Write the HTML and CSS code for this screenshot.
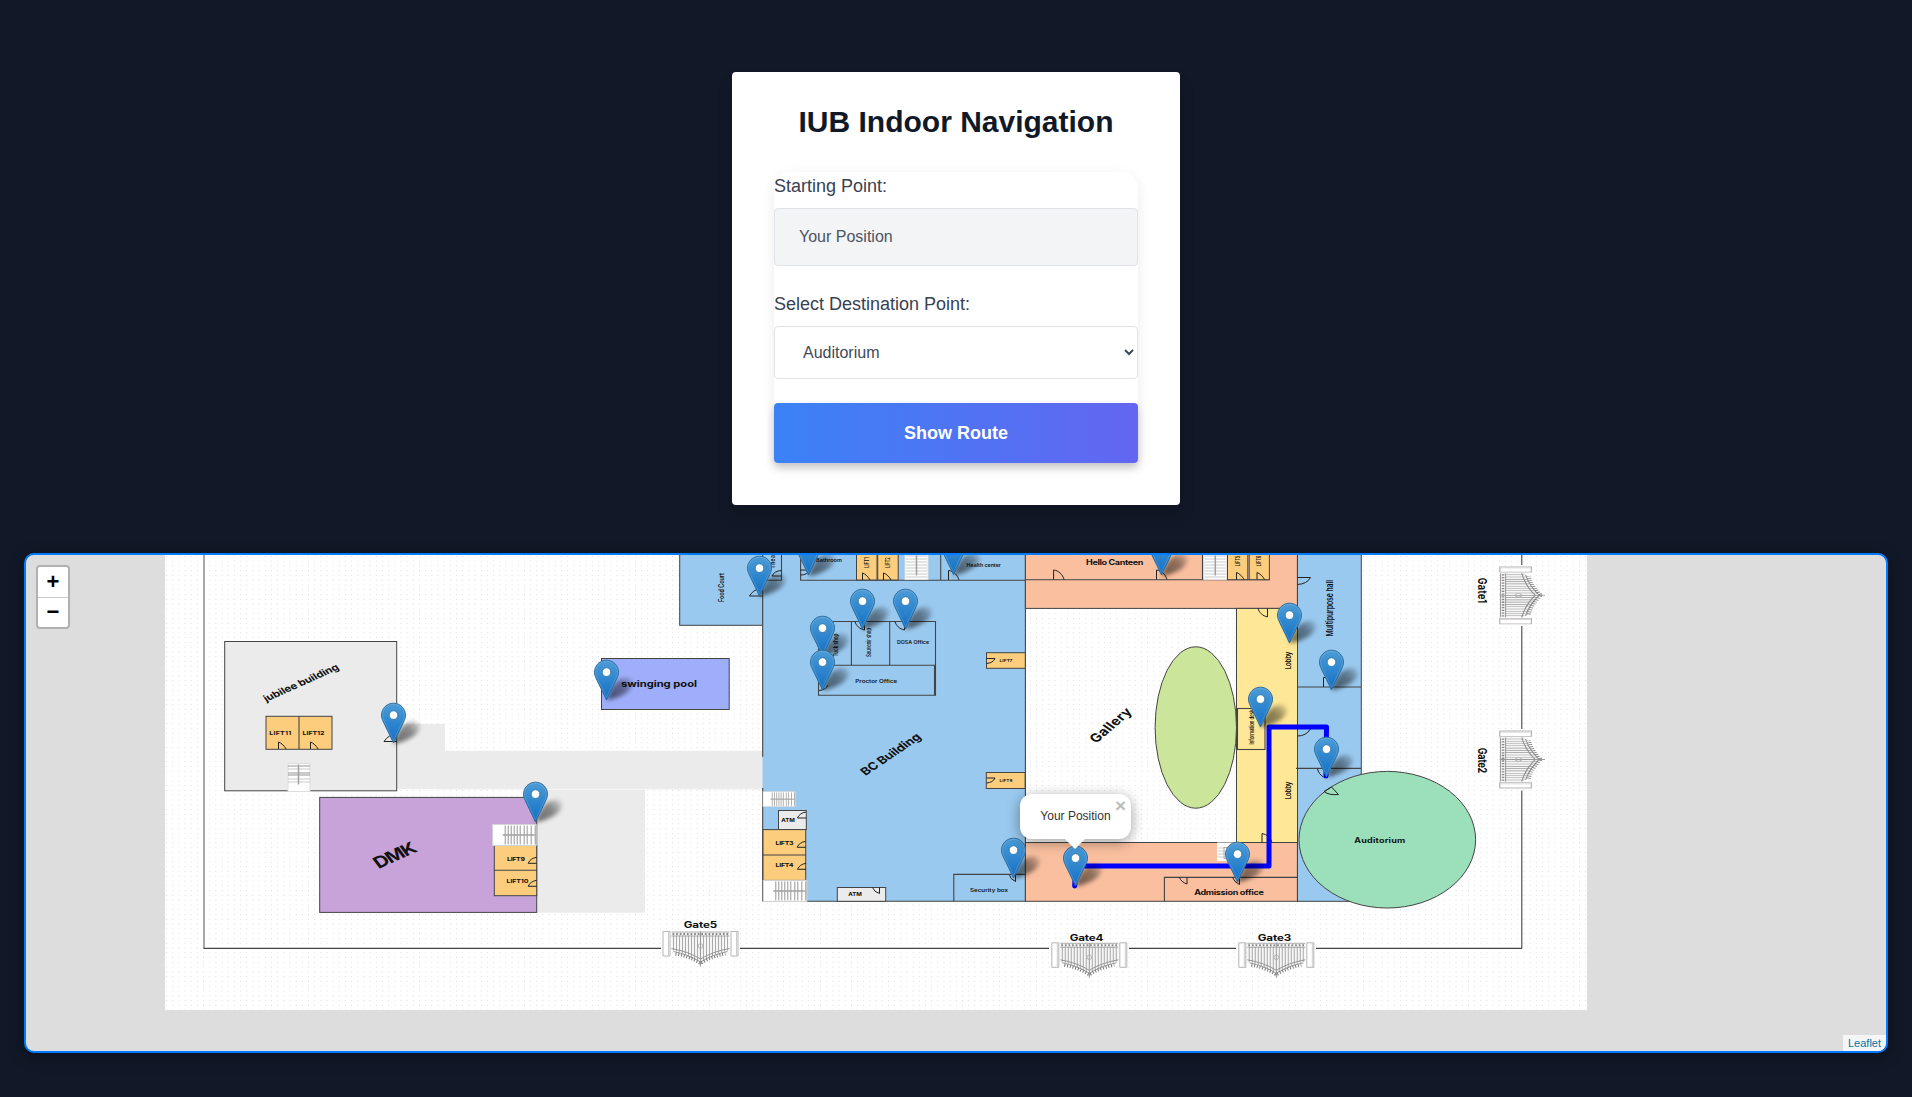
FILE: index.html
```html
<!DOCTYPE html>
<html lang="en">
<head>
<meta charset="utf-8">
<title>IUB Indoor Navigation</title>
<link rel="stylesheet" href="styles.css">
</head>
<body>
<main class="page">
  <section class="card">
    <h1 class="title">IUB Indoor Navigation</h1>
    <form class="form">
      <label class="label">Starting Point:</label>
      <div class="field readonly">Your Position</div>
      <label class="label second" for="dest">Select Destination Point:</label>
      <select class="field select" id="dest"><option>Auditorium</option></select>
      <button class="button" type="button">Show Route</button>
    </form>
  </section>

  <section class="map">
    <svg class="plan" viewBox="26 555 1860 496" width="1860" height="496">
      <defs>
        <pattern id="dots" x="1576.4" y="1002.9" width="6.17" height="4.775" patternUnits="userSpaceOnUse">
          <circle cx="3.08" cy="2.4" r=".52" fill="#d4d4d4"/>
        </pattern>
        <linearGradient id="pinFill" x1="0" y1="0" x2="0" y2="1">
          <stop offset="0" stop-color="#4c9cd6"/><stop offset="1" stop-color="#126fc6"/>
        </linearGradient>
        <linearGradient id="shadeFill" gradientUnits="userSpaceOnUse" x1="2" y1="-2" x2="26" y2="-24">
          <stop offset="0" stop-opacity=".55"/><stop offset=".55" stop-opacity=".42"/><stop offset="1" stop-opacity=".05"/>
        </linearGradient>
        <filter id="soft" x="-50%" y="-50%" width="200%" height="200%"><feGaussianBlur stdDeviation="2"/></filter>
        <g id="pin">
          <path d="M0-40.4C-6.6-40.4-12-35.1-12-28.5c0 2.6.8 4.6 1.9 6.9L0-.6 10.1-21.6c1.1-2.3 1.9-4.3 1.9-6.9C12-35.1 6.6-40.4 0-40.4z" fill="url(#pinFill)" stroke="#2e6f9f" stroke-width="1"/>
          <path d="M0-39.3C-6-39.3-10.9-34.4-10.9-28.5c0 2.4.7 4.2 1.8 6.4L0-3.2 9.1-22.1c1.1-2.2 1.8-4 1.8-6.4C10.9-34.4 6-39.3 0-39.3z" fill="none" stroke="#fff" stroke-opacity=".14"/>
          <circle cy="-28.5" r="4.4" fill="#fff" stroke="#2f78ad" stroke-width="1"/>
        </g>
        <path id="shade" d="M0 0C2-7 5-15 12-20C19-25 28-23 26-15C23-7 10-2 0 0z" fill="url(#shadeFill)" filter="url(#soft)"/>
        <!-- quarter-swing doors, hinged at the origin -->
        <path id="door" class="doorline" d="M0 0V-9.5C5-9 9-5 10.500 0"/>
        <path id="doorSmall" class="doorline" d="M0 0V-7C3-6 6-3 7.500 0"/>
        <path id="doorDown" class="doorline" d="M0 0V8.500C-5 7.500-8.500 4-9.500 0"/>
        <path id="doorSide" class="doorline" d="M0 0H-8.500C-7.500-3-4-5.500 0-6"/>
        <g id="stairsV">
          <rect width="23" height="26" fill="#fff" stroke="#ddd"/>
          <path class="tread" d="M1 2.500H22M1 5.500H22M1 8.500H22M1 11.500H22M1 14.500H22M1 17.500H22M1 20.500H22M1 23.500H22"/>
          <path class="rail" d="M11.500 2V22"/>
        </g>
        <g id="stairsH">
          <rect width="43.500" height="21" fill="#fff" stroke="#d5d5d5"/>
          <path class="tread dark" d="M12.500 1V20M15.500 1V20M18.500 1V20M21.500 1V20M24.500 1V20M27.500 1V20M31.500 1V20M34.500 1V20M38.500 1V20M42.500 1V20"/>
          <path class="rail" d="M10 10.500H42"/>
        </g>
        <!-- gate, 76 x 36, centred on the origin -->
        <g id="gate">
          <path d="M-29 2V20Q-12 24 0 31Q12 24 29 20V2z" fill="#f5f5f5"/>
          <path class="bars" d="M-27 5V20M-24 5V21M-21 5V22M-18 5V23M-15 5V24M-12 5V26M-9 5V27M-6 5V29M-3 5V30M3 5V30M6 5V29M9 5V27M12 5V26M15 5V24M18 5V23M21 5V22M24 5V21M27 5V20"/>
          <path d="M-29 1.500H29M-29 5.500H29" stroke="#999" fill="none" stroke-width=".8"/>
          <path d="M-28 3.500H28" stroke="#888" stroke-width="2" stroke-dasharray="1.700 1.900" fill="none"/>
          <path d="M-29 18Q-12 21 0 28.500Q12 21 29 18M-27 21Q-12 24 0 31.500Q12 24 27 21" stroke="#8c8c8c" fill="none" stroke-width=".9"/>
          <path d="M-25 23.500Q-12 25.500 0 33Q12 25.500 25 23.500" stroke="#777" fill="none" stroke-width="3" stroke-dasharray="1 1.800"/>
          <path d="M0 1V36M-2 33H2" stroke="#999" fill="none"/>
          <circle cy="15.500" r="2.300" fill="none" stroke="#aaa" stroke-width=".8"/>
          <path d="M-37.500 1H-30.500V25.500H-37.500zM30.500 1H37.500V25.500H30.500z" fill="#fff" stroke="#b9b4b4"/>
          <path d="M-32 1V25M36 1V25" stroke="#ccc"/>
        </g>
      </defs>

      <rect x="165" y="540" width="1422" height="470" fill="#fff"/>
      <rect x="165" y="540" width="1422" height="470" fill="url(#dots)"/>

      <!-- campus boundary -->
      <path d="M204 540V948.500" stroke="#999" stroke-width="1.700"/>
      <path class="line" d="M203.500 948.400H661M740 948.400H1049M1129 948.400H1236M1316 948.400H1522M1521.800 555V565M1521.800 626V729M1521.800 790.500V948.500"/>

      <!-- walkways -->
      <path fill="#ebebeb" d="M397 724H445V750.700H763V789.300H645V912.700H537V789.300H397z"/>
      <path d="M445 789.300H763" stroke="#f6f6f6"/>

      <!-- jubilee building -->
      <rect class="room grey" x="224.700" y="641.500" width="172" height="149.300"/>
      <rect class="room lift" x="266" y="716.300" width="66" height="33"/><path class="line" d="M299 716V749"/>
      <use href="#doorSmall" x="278.500" y="749"/><use href="#doorSmall" x="310.500" y="749"/>
      <g transform="translate(288 763.500)"><rect width="22" height="28" fill="#fff" stroke="#ddd"/><path class="tread dark" d="M0 2.500H22M0 9.500H22M0 11.500H22"/><path class="tread" d="M0 5.500H22M0 15.500H22M0 18.500H22"/><path class="rail" d="M10.500 1V21"/></g>
      <path class="doorline" d="M397 741.500H384Q388 735 397 733.500"/>

      <!-- DMK -->
      <rect class="room" fill="#c7a3da" x="319.700" y="797.400" width="217" height="115"/>
      <rect class="room lift" x="494.300" y="845.300" width="42.400" height="50.400"/><path class="line" d="M494 870.300H537"/>
      <use href="#stairsH" x="492.700" y="824.500"/>
      <use href="#doorSide" x="536.700" y="863.300"/><use href="#doorSide" x="536.700" y="886.300"/>

      <!-- pool -->
      <rect class="room" fill="#9eaefb" x="601.500" y="658.500" width="127.700" height="51"/>

      <!-- BC building -->
      <rect class="room blue" x="679.700" y="540" width="83" height="85.300"/>
      <path fill="#9ac9ef" d="M762.500 540H1025.500V901.300H762.500z"/>
      <path class="line" d="M762.700 555V756.700M762.700 788V901.300M762.700 901.300H1025.500M1025.400 555V901.300"/>
      <path class="line" d="M763 580.300H781.500V555M800.600 555V580.300H1025.500M940.700 555V580.300"/>
      <path class="doorline" d="M781.500 576H772Q774 571 781.500 570.500M749.500 596H762.500M749.500 596Q753 590 759 589M800.600 570H808.600Q808 575 800.600 575"/>
      <rect class="room lift" x="856.500" y="540" width="20.500" height="40"/><rect class="room lift" x="877.700" y="540" width="20.500" height="40"/>
      <use href="#doorSmall" x="862.500" y="580"/><use href="#doorSmall" x="883.500" y="580"/>
      <use href="#stairsV" x="905" y="553.500"/>
      <use href="#door" x="948.500" y="580"/>
      <path class="line" d="M818.500 621.500H935.500V695.300H818.500zM818.500 665.300H935.500M851.400 621.500V665.300M889.700 621.500V665.300"/>
      <path class="line" d="M934.500 665.300V695.300"/>
      <use href="#doorDown" x="864.500" y="621.500"/><use href="#doorDown" x="904.500" y="621.500"/>
      <path class="doorline" d="M819 690.500Q826 690 828 685"/>
      <rect class="room lift" x="986.500" y="652.700" width="38.800" height="15.600"/><rect class="room lift" x="986.300" y="772.500" width="38.800" height="16"/>
      <path class="doorline" d="M986.500 658.500H995Q993 663 986.500 663.500M986.500 778H995Q993 782.500 986.500 783"/>
      <g transform="translate(763 791.700) scale(.74 .71)"><use href="#stairsH"/></g>
      <rect class="room grey" x="778.500" y="810.500" width="27.800" height="19"/><use href="#doorSide" x="806" y="818"/>
      <rect class="room lift" x="763" y="829.600" width="42.700" height="50.800"/><path class="line" d="M763 855H806"/>
      <use href="#doorSide" x="805.700" y="847.300"/><use href="#doorSide" x="806" y="869.300"/>
      <use href="#stairsH" x="763.300" y="880.400"/>
      <rect class="room grey" x="837.300" y="887.500" width="48.400" height="13.800"/>
      <path class="doorline" d="M879.500 887.500V893.500Q874 892 872.500 887.500"/>
      <path class="line" d="M953.800 901.300V874.400H1025.400"/><path class="doorline" d="M1015.500 874.400V881.500Q1010 879 1009.500 875"/>

      <!-- canteen and admission wings -->
      <rect class="room salmon" x="1025.400" y="540" width="272" height="68.400"/>
      <path class="line" d="M1025.400 579.700H1269.500M1202.500 555V579.700"/>
      <use href="#door" x="1053.600" y="579.500"/><use href="#door" x="1156.500" y="579.500"/>
      <use href="#stairsV" x="1203.800" y="553.500"/>
      <rect class="room lift" x="1227.500" y="540" width="20.300" height="39.700"/><rect class="room lift" x="1249.200" y="540" width="20.200" height="39.700"/>
      <use href="#doorSmall" x="1236.500" y="579.500"/><use href="#doorSmall" x="1257" y="579.500"/>
      <rect class="room yellow" x="1236.500" y="608.400" width="61" height="234.200"/>
      <use href="#doorDown" x="1267.500" y="608.400"/>
      <ellipse class="room" fill="#cbe59b" cx="1195.800" cy="727.500" rx="40.700" ry="80.700"/>
      <rect class="line" x="1237.500" y="708.500" width="27.500" height="41" fill="none"/>
      <rect class="room salmon" x="1025.400" y="842.500" width="272" height="58.800"/>
      <path class="line" d="M1297.400 877.400H1164.400V901.300"/>
      <g transform="translate(1217 842.500)"><rect width="23" height="18.500" fill="#fff"/><path class="tread" d="M1 5.500H8M1 8.500H8M1 11.500H8M1 14.500H8"/><rect x="7" y="5" width="3" height="11" class="rail thin"/></g>
      <path class="doorline" d="M1187 877.400V884Q1181 882 1179.500 877.400M1239.500 877.400V884.500Q1234 882 1232.500 877.400M1262 842.500V833.500Q1270 835 1272 842.500"/>

      <!-- east wing -->
      <rect class="room blue" x="1297.500" y="540" width="63.800" height="361.300"/>
      <path class="line" d="M1297.500 687H1361M1296 768.400H1361"/>
      <path class="doorline" d="M1297.500 577.500H1310.500Q1307 584 1297.500 584.500M1323.500 687V677.500H1327M1310.500 729Q1306 736 1297.500 736M1317.500 768.400Q1318 774 1325 778"/>
      <ellipse class="room" fill="#9ce0bb" cx="1387.300" cy="839.700" rx="88.300" ry="68.300"/>
      <path class="doorline" d="M1331.500 787L1324 791.500Q1329 795.500 1338.500 794.500L1331.500 787"/>

      <!-- gates -->
      <use href="#gate" x="700.500" y="930.500"/><use href="#gate" x="1089.300" y="941.800"/><use href="#gate" x="1276.300" y="941.800"/>
      <g transform="translate(1498.500 595.300) rotate(-90) scale(.76 1.290)"><use href="#gate"/></g>
      <g transform="translate(1498.500 759.500) rotate(-90) scale(.76 1.290)"><use href="#gate"/></g>

      <g class="names">
        <text transform="translate(303 685.500) scale(1.290 1) rotate(-30)" font-size="9" textLength="66">jubilee building</text>
        <text transform="translate(398.500 860) scale(1.290 1) rotate(-30)" font-size="16" textLength="36">DMK</text>
        <text transform="translate(893.700 757) scale(1.290 1) rotate(-41)" font-size="10.500" textLength="58">BC Building</text>
        <text transform="translate(1114.500 728) scale(1.290 1) rotate(-48)" font-size="11.800" textLength="42.500">Gallery</text>
        <text transform="translate(659 686.800) scale(1.290 1)" font-size="8.700" textLength="59">swinging pool</text>
        <text transform="translate(1379.800 843.300) scale(1.290 1)" font-size="7" textLength="39.500">Auditorium</text>
        <text transform="translate(1229 895) scale(1.290 1)" font-size="7" textLength="54">Admission office</text>
        <text transform="translate(1114.700 565.200) scale(1.290 1)" font-size="7" textLength="44.500">Hello Canteen</text>
        <text transform="translate(700.500 927.700) scale(1.290 1)" font-size="9" textLength="26">Gate5</text>
        <text transform="translate(1086.500 941) scale(1.290 1)" font-size="9" textLength="26">Gate4</text>
        <text transform="translate(1274.500 941) scale(1.290 1)" font-size="9" textLength="26">Gate3</text>
        <text transform="translate(1478 590.500) scale(1.290 1) rotate(90)" font-size="9" textLength="25.500">Gate1</text>
        <text transform="translate(1478 760.500) scale(1.290 1) rotate(90)" font-size="9" textLength="25.500">Gate2</text>
        <text class="light" transform="translate(1333.200 608.300) scale(1.290 1) rotate(-90)" font-size="7.200" textLength="56.500" lengthAdjust="spacingAndGlyphs">Multipurpose hall</text>
        <text class="light" transform="translate(1290.700 660.500) scale(1.290 1) rotate(-90)" font-size="6" textLength="17.500">Lobby</text>
        <text class="light" transform="translate(1290.700 790.500) scale(1.290 1) rotate(-90)" font-size="6" textLength="17.500">Lobby</text>
        <text class="light" transform="translate(1254.300 727) scale(1.290 1) rotate(-90)" font-size="4.300" textLength="35" lengthAdjust="spacingAndGlyphs">Information desk</text>
        <text class="light" transform="translate(723.700 587.500) scale(1.290 1) rotate(-90)" font-size="5.500" textLength="29">Food Court</text>
        <text class="light" transform="translate(774.500 558) scale(1.290 1) rotate(-90)" font-size="5" textLength="21">Theatre</text>
        <text class="light" transform="translate(837.500 645) scale(1.290 1) rotate(-90)" font-size="4.600" textLength="23">Tuck shop</text>
        <text class="light" transform="translate(871 642.500) scale(1.290 1) rotate(-90)" font-size="4.300" textLength="29" lengthAdjust="spacingAndGlyphs">Souvenir shop</text>
        <text class="light" transform="translate(868.500 562.500) scale(1.290 1) rotate(-90)" font-size="4.400" textLength="10.500" lengthAdjust="spacingAndGlyphs">LIFT1</text>
        <text class="light" transform="translate(889.500 562.500) scale(1.290 1) rotate(-90)" font-size="4.400" textLength="10.500" lengthAdjust="spacingAndGlyphs">LIFT2</text>
        <text class="light" transform="translate(1239.500 561) scale(1.290 1) rotate(-90)" font-size="4.400" textLength="10.500" lengthAdjust="spacingAndGlyphs">LIFT5</text>
        <text class="light" transform="translate(1260.500 561) scale(1.290 1) rotate(-90)" font-size="4.400" textLength="10.500" lengthAdjust="spacingAndGlyphs">LIFT6</text>
        <g class="light" font-size="4.600">
          <text transform="translate(829 562) scale(1.290 1)" textLength="20" lengthAdjust="spacingAndGlyphs">Bathroom</text>
          <text transform="translate(983.700 567) scale(1.290 1)" textLength="26.500" lengthAdjust="spacingAndGlyphs">Health center</text>
          <text transform="translate(913 643.800) scale(1.290 1)" textLength="25" lengthAdjust="spacingAndGlyphs">DOSA Office</text>
          <text transform="translate(876.300 683.300) scale(1.290 1)" textLength="32.500" lengthAdjust="spacingAndGlyphs">Proctor Office</text>
          <text transform="translate(989 891.700) scale(1.290 1)" textLength="29.500" lengthAdjust="spacingAndGlyphs">Security box</text>
          <text transform="translate(1006 662.300) scale(1.290 1)" font-size="4" textLength="10" lengthAdjust="spacingAndGlyphs">LIFT7</text>
          <text transform="translate(1006 781.800) scale(1.290 1)" font-size="4" textLength="10" lengthAdjust="spacingAndGlyphs">LIFT8</text>
        </g>
        <g font-size="5.400">
          <text transform="translate(280.300 735) scale(1.290 1)" textLength="17">LIFT11</text>
          <text transform="translate(313.500 735) scale(1.290 1)" textLength="17">LIFT12</text>
          <text transform="translate(516 860.600) scale(1.290 1)" textLength="14">LIFT9</text>
          <text transform="translate(517.500 882.700) scale(1.290 1)" textLength="17">LIFT10</text>
          <text transform="translate(788 821.800) scale(1.290 1)" font-size="5" textLength="10.500" lengthAdjust="spacingAndGlyphs">ATM</text>
          <text transform="translate(784.500 844.500) scale(1.290 1)" textLength="14">LIFT3</text>
          <text transform="translate(784.500 866.700) scale(1.290 1)" textLength="14">LIFT4</text>
          <text transform="translate(855 896.300) scale(1.290 1)" font-size="5" textLength="10.500" lengthAdjust="spacingAndGlyphs">ATM</text>
        </g>
      </g>

      <path class="route" d="M1074.700 886L1075.400 866H1269V727H1326.500L1326 776"/>

      <g transform="translate(0 .5)">
        <use href="#shade" x="393.500" y="743.500"/><use href="#shade" x="535.500" y="822"/><use href="#shade" x="606.500" y="700"/><use href="#shade" x="759.500" y="596"/><use href="#shade" x="808.500" y="576"/><use href="#shade" x="953.500" y="575"/><use href="#shade" x="862.500" y="629"/><use href="#shade" x="905.500" y="629"/><use href="#shade" x="822.500" y="656"/><use href="#shade" x="822.500" y="690"/><use href="#shade" x="1013.500" y="878"/><use href="#shade" x="1161.500" y="576"/><use href="#shade" x="1289.500" y="643"/><use href="#shade" x="1260.500" y="727"/><use href="#shade" x="1331.500" y="690"/><use href="#shade" x="1326.500" y="777"/><use href="#shade" x="1075.500" y="886"/><use href="#shade" x="1237.500" y="882"/>
      </g>
      <g transform="translate(0 .6)">
        <use href="#pin" x="808.500" y="575"/><use href="#pin" x="953.500" y="574.500"/><use href="#pin" x="1161.500" y="575"/><use href="#pin" x="759.500" y="596"/><use href="#pin" x="862.500" y="629"/><use href="#pin" x="905.500" y="629"/><use href="#pin" x="822.500" y="656"/><use href="#pin" x="822.500" y="690"/><use href="#pin" x="606.500" y="700"/><use href="#pin" x="393.500" y="743"/><use href="#pin" x="535.500" y="822"/><use href="#pin" x="1289.500" y="643"/><use href="#pin" x="1331.500" y="690"/><use href="#pin" x="1260.500" y="727"/><use href="#pin" x="1326.500" y="777"/><use href="#pin" x="1013.500" y="878"/><use href="#pin" x="1237.500" y="882"/><use href="#pin" x="1075.500" y="886"/>
      </g>
    </svg>

    <div class="zoom"><span class="zoom-btn">+</span><span class="zoom-btn">−</span></div>
    <div class="popup">Your Position<span class="close">×</span></div>
    <div class="credit">Leaflet</div>
  </section>
</main>
</body>
</html>
```
FILE: styles.css
```css
* { box-sizing: border-box; }
body {
  margin: 0;
  background: #111827;
  font-family: "Liberation Sans", Arial, sans-serif;
}
.page {
  height: 1097px;
  padding: 72px 24px 0;
  display: flex;
  flex-direction: column;
  align-items: center;
  gap: 48px;
  overflow: hidden;
}
.card {
  width: 448px;
  height: 433px;
  flex: none;
  padding: 32px 42px 0;
  background: #fff;
  border-radius: 4px;
  box-shadow: 0 10px 15px rgba(0, 0, 0, .15);
}
.title {
  margin: 0 0 32px;
  font-size: 30px;
  line-height: 36px;
  text-align: center;
  color: #111827;
}
.form {
  display: flex;
  flex-direction: column;
  height: 291px;
  border-radius: 16px 16px 4px 4px;
  box-shadow: 0 4px 14px rgba(0, 0, 0, .08);
}
.label {
  font-size: 18px;
  line-height: 28px;
  margin-bottom: 8px;
  color: #374151;
}
.label.second { margin-top: 24px; }
.field {
  border: 1px solid #dfe2e7;
  border-radius: 4px;
  color: #4b5563;
  font-size: 16px;
}
.readonly {
  height: 58px;
  padding: 0 24px;
  line-height: 56px;
  background: #f3f4f6;
}
.select {
  height: 53px;
  padding: 0 0 0 24px;
  background: #fff;
  color: #3f4957;
  font-family: inherit;
}
.button {
  height: 60px;
  margin-top: 24px;
  border: 0;
  border-radius: 4px;
  background: linear-gradient(to right, #3b82f6, #6366f1);
  box-shadow: 0 4px 8px rgba(0, 0, 0, .2);
  color: #fff;
  font: bold 18px "Liberation Sans", Arial, sans-serif;
}
.map {
  position: relative;
  width: 1864px;
  height: 500px;
  flex: none;
  border: 2px solid #007bff;
  border-radius: 10px;
  background: #ddd;
  overflow: hidden;
  box-shadow: 0 4px 16px rgba(0, 0, 0, .3);
}
.plan { display: block; }
.room { stroke: #444; stroke-width: 1; }
.line { stroke: #444; stroke-width: 1.1; fill: none; }
.grey { fill: #ebebeb; }
.lift { fill: #fbcd7c; }
.blue { fill: #9ac9ef; }
.salmon { fill: #f9bf9f; }
.yellow { fill: #fee796; }
.doorline { fill: none; stroke: #222; stroke-width: 1; }
.tread { fill: none; stroke: #c4c4c4; stroke-width: .9; }
.dark { stroke: #8a8a8a; }
.rail { fill: none; stroke: #a0a0a0; stroke-width: 1.5; }
.thin { stroke-width: .8; }
.bars { fill: none; stroke: #999; stroke-width: .8; }
.route { fill: none; stroke: #00f; stroke-width: 5; stroke-linecap: round; stroke-linejoin: round; }
.names { font-family: Inter, sans-serif; font-weight: 700; fill: #111; text-anchor: middle; }
.light { font-weight: 600; }
.zoom {
  position: absolute;
  left: 10px;
  top: 10px;
  width: 34px;
  border: 2px solid #b1b1b1;
  border-radius: 4px;
  background: #fff;
}
.zoom-btn {
  display: block;
  height: 30px;
  font: bold 22px/30px "Liberation Sans", Arial, sans-serif;
  text-align: center;
  color: #000;
}
.zoom-btn + .zoom-btn {
  border-top: 1px solid #ccc;
  line-height: 27px;
}
.popup {
  position: absolute;
  left: 994px;
  top: 239px;
  width: 111px;
  height: 45px;
  border-radius: 12px;
  background: #fff;
  box-shadow: 0 3px 14px rgba(0, 0, 0, .4);
  font-size: 12px;
  line-height: 44px;
  text-align: center;
  color: #333;
}
.popup::after {
  content: "";
  position: absolute;
  left: 44px;
  top: 44px;
  border: 11.5px solid transparent;
  border-top-color: #fff;
  border-bottom: 0;
}
.close {
  position: absolute;
  right: 5px;
  top: 3px;
  font: bold 19px/17px "Liberation Sans", Arial, sans-serif;
  color: #bdbdbd;
}
.credit {
  position: absolute;
  right: 0;
  bottom: 0;
  height: 16px;
  padding: 0 5px;
  background: rgba(255, 255, 255, .7);
  font-size: 11px;
  line-height: 16px;
  color: #0078a8;
}
```
